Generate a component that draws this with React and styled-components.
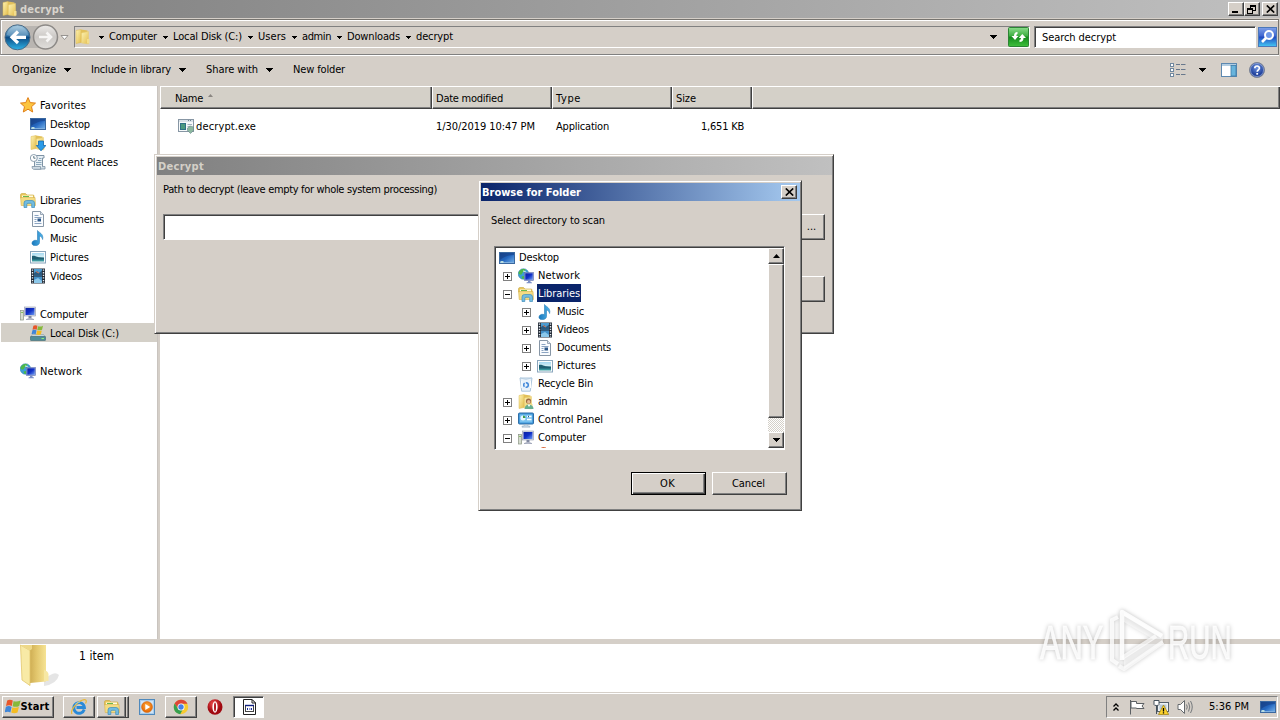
import React, { useLayoutEffect, useRef, useState } from 'react';
import styled, { createGlobalStyle, css } from 'styled-components';

const FACE = '#d5cfc8';
const DARK = '#404040';
const MID = '#808080';

const Global = createGlobalStyle`
  * { box-sizing: border-box; }
  body {
    margin: 0;
    width: 1280px;
    height: 720px;
    overflow: hidden;
    background: ${FACE};
    color: #000;
    font: 11px/14px 'DejaVu Sans Condensed', 'DejaVu Sans', sans-serif;
  }
  svg { display: block; flex: none; }
`;

/* ---------- text ---------- */

const Text = styled.span`
  display: inline-block;
  align-self: center;
  white-space: pre;
  flex: none;
`;

/* Spreads the letters so that a caption fills the given width. */
function Fit({ w, children, className }) {
  const ref = useRef(null);
  const [gap, setGap] = useState(0);
  useLayoutEffect(() => {
    const natural = ref.current.getBoundingClientRect().width;
    setGap((w - natural) / children.length);
  }, [w, children]);
  return <Text ref={ref} className={className} style={{ letterSpacing: gap }}>{children}</Text>;
}

/* ---------- icons ---------- */

const Svg = ({ s = 16, children }) => (
  <svg width={s} height={s} viewBox="0 0 16 16">{children}</svg>
);

const Defs = styled.svg`
  position: absolute;
`;

const Gradients = () => (
  <Defs width="0" height="0">
    <defs>
      <linearGradient id="gFolder" x1="0" x2="1" y1="0" y2="1"><stop offset="0" stopColor="#fdf3b4" /><stop offset="1" stopColor="#e3bd4c" /></linearGradient>
      <linearGradient id="gScreen" x1="0" x2="1" y1="0" y2="1"><stop offset="0" stopColor="#1c4a8c" /><stop offset=".5" stopColor="#2467c0" /><stop offset="1" stopColor="#7db8ec" /></linearGradient>
      <linearGradient id="gMon" x1="0" x2="1" y1="0" y2="1"><stop offset="0" stopColor="#0a1fa0" /><stop offset=".5" stopColor="#1030c8" /><stop offset="1" stopColor="#6f9cf0" /></linearGradient>
      <linearGradient id="gNote" x1="0" x2="1"><stop offset="0" stopColor="#1778bd" /><stop offset="1" stopColor="#52b5ea" /></linearGradient>
      <linearGradient id="gPhoto" x1="0" x2="0" y1="0" y2="1"><stop offset="0" stopColor="#a5d8f2" /><stop offset=".5" stopColor="#d8f0f4" /><stop offset=".55" stopColor="#27748a" /><stop offset="1" stopColor="#3fa2a4" /></linearGradient>
      <linearGradient id="gBack" x1="0" x2="0" y1="0" y2="1"><stop offset="0" stopColor="#9cc4dc" /><stop offset=".45" stopColor="#2a6fa4" /><stop offset=".5" stopColor="#0d4a82" /><stop offset="1" stopColor="#2fb4e8" /></linearGradient>
      <linearGradient id="gFwd" x1="0" x2="0" y1="0" y2="1"><stop offset="0" stopColor="#eceae8" /><stop offset=".5" stopColor="#cbc8c5" /><stop offset="1" stopColor="#e0dedb" /></linearGradient>
      <linearGradient id="gGreen" x1="0" x2="0" y1="0" y2="1"><stop offset="0" stopColor="#8bdc8b" /><stop offset=".45" stopColor="#3cae40" /><stop offset=".5" stopColor="#148a1c" /><stop offset="1" stopColor="#3fc03c" /></linearGradient>
      <linearGradient id="gSearch" x1="0" x2="0" y1="0" y2="1"><stop offset="0" stopColor="#7fa0e8" /><stop offset=".45" stopColor="#3f66d0" /><stop offset=".5" stopColor="#2048c0" /><stop offset="1" stopColor="#44c8f4" /></linearGradient>
      <radialGradient id="gHelp" cx=".5" cy=".35"><stop offset="0" stopColor="#6f94e0" /><stop offset="1" stopColor="#1c3c98" /></radialGradient>
      <radialGradient id="gOpera" cx=".4" cy=".3"><stop offset="0" stopColor="#f05050" /><stop offset="1" stopColor="#a00810" /></radialGradient>
      <radialGradient id="gOrange" cx=".5" cy=".4"><stop offset="0" stopColor="#ffb040" /><stop offset="1" stopColor="#e86c08" /></radialGradient>
      <linearGradient id="gBig" x1="0" x2="1"><stop offset="0" stopColor="#cfae54" /><stop offset=".4" stopColor="#e2c66c" /><stop offset="1" stopColor="#f6e394" /></linearGradient>
      <pattern id="dither" width="2" height="2" patternUnits="userSpaceOnUse"><rect width="2" height="2" fill="#fff" /><rect width="1" height="1" fill="#d4d0c8" /><rect x="1" y="1" width="1" height="1" fill="#d4d0c8" /></pattern>
    </defs>
  </Defs>
);

const Flag = () => (
  <>
    <path d="M2.2 1.600C4 .4 5.800 .6 7.800 1.600L6.800 7C5 6 3.200 6 1 7Z" fill="#e8562a" />
    <path d="M8.600 2C10.400 2.800 12.800 2.800 15.600 1.400L14.200 7C11.800 8.200 9.600 8 7.600 7.200Z" fill="#86b93a" />
    <path d="M.9 7.800C3 6.800 4.800 6.900 6.600 7.900L5.400 13.400C3.800 12.400 2 12.400 -.4 13.400Z" fill="#3f86d8" />
    <path d="M7.400 8.200C9.200 9 11.400 9 13.900 8L12.500 13.600C10.200 14.600 8 14.400 6.200 13.600Z" fill="#f4bc22" />
  </>
);

const Mini = () => (
  <>
    <path d="M1 1.500L6 .5v13L1 14.500Z" fill="url(#gFolder)" stroke="#dcb850" strokeWidth=".5" />
    <path d="M6 .5L12.500 1.500V14L6 13.500Z" fill="#e2c05a" />
    <path d="M6.500 4L13.500 2.500V15L6.500 14Z" fill="url(#gFolder)" stroke="#e8cc70" strokeWidth=".5" />
    <path d="M12 10h2.500v4.500H12Z" fill="#f3dd8c" />
  </>
);

const Stacked = () => (
  <>
    <path d="M.5 3Q.5 1.500 2 1.500H5.500L7 3H13Q14 3 14 4V6H.5Z" fill="#e9c95c" stroke="#c9a53a" strokeWidth=".6" />
    <rect x="2" y="3.500" width="11" height="6" fill="#fffbe0" />
    <path d="M3 4.500h6" stroke="#68b84c" />
    <path d="M.6 5.500H15L15.500 13.500H1.200Z" fill="#f4dc82" stroke="#d6b24c" strokeWidth=".6" />
    <path d="M4 15.500V11Q4 8.500 6.500 8.500H12Q14.500 8.500 14.500 11V15.500H11.700V12.500Q11.700 11.300 10.500 11.300H8Q6.800 11.300 6.800 12.500V15.500Z" fill="#72bce0" stroke="#3e8cbc" strokeWidth=".7" />
  </>
);

const Sheet = () => (
  <>
    <path d="M2.500 .5H10.500L13.500 3.500V15.500H2.500Z" fill="#fafcfe" stroke="#8796a6" />
    <path d="M10.500 .5V3.500H13.500" fill="#dbe4ee" stroke="#8796a6" strokeWidth=".8" />
    <path d="M4.500 4.500h4M4.500 6.500h7M4.500 8.500h2M4.500 10.500h2M4.500 12.500h7" stroke="#8ba4c2" />
    <rect x="7.500" y="7.500" width="3.500" height="3" fill="#2c5788" />
  </>
);

const shapes = {
  star: <path d="M8 .6L10.200 5.600L15.500 6.100L11.500 9.700L12.700 15L8 12.200L3.300 15L4.500 9.700L.5 6.100L5.800 5.600Z" fill="#fcc540" stroke="#e07f18" strokeWidth="1" strokeLinejoin="round" />,
  desktop: (
    <>
      <rect x=".5" y="2.500" width="15" height="11" fill="url(#gScreen)" stroke="#3a68a0" />
      <path d="M1 3H15V5C9 5 5 7 1 10Z" fill="#163e86" opacity=".6" />
      <path d="M1 12.500h14" stroke="#7fb0e0" /><path d="M1.500 11h3v2h-3Z" fill="#b8dce0" />
    </>
  ),
  downloads: (
    <>
      <Mini />
      <path d="M8.500 6H13.500V10.500H15.900L11 15.800L6.300 10.500H8.500Z" fill="#2a9be8" stroke="#1468b0" strokeWidth=".8" />
    </>
  ),
  recent: (
    <>
      <path d="M4.500 1.500H14V4H12.500V13Q12.500 15 10.500 15H4.500Z" fill="#e6eef4" stroke="#7f93a4" />
      <path d="M2 12.500H10.500V15.300H3.500Q2 15 2 12.500Z" fill="#cfdbe4" stroke="#7f93a4" strokeWidth=".8" />
      <path d="M12.500 12.500h2.500v2.500H10.500" fill="#cfdbe4" stroke="#7f93a4" strokeWidth=".8" />
      <path d="M9 4.500h2.500M8 6.500h3.500M6 8.500h5.500M6 10.500h5.500" stroke="#8ba8bc" />
      <circle cx="3.800" cy="4" r="3.500" fill="#fff" stroke="#8c9eae" /><path d="M3.800 2v2.200H5.500" stroke="#356" fill="none" strokeWidth=".8" />
    </>
  ),
  libraries: <Stacked />,
  documents: <Sheet />,
  music: <path d="M7.500 .5C8.500 2.500 14 3.500 12.600 9.500C12.300 7 10.500 6.200 9.500 6V12.500C9.500 14.700 7 15.800 4.800 15.600C2.300 15.500 1.300 13.500 2.400 11.800C3.400 10.200 5.700 9.900 7.500 10.700Z" fill="url(#gNote)" stroke="#2b7fb8" strokeWidth=".6" />,
  pictures: (
    <>
      <rect x=".5" y="2.500" width="15" height="11.500" fill="#fbfdfe" stroke="#8aa5bc" />
      <rect x="2" y="4" width="12" height="8.500" fill="url(#gPhoto)" />
      <path d="M2 7C5 6 7 9 14 9V10.500H2Z" fill="#1f5e72" />
    </>
  ),
  videos: (
    <>
      <rect x="1" y=".5" width="14" height="15" fill="#232b36" />
      <rect x="4" y="1" width="8" height="6.500" fill="#4c9bd0" /><rect x="4" y="8.500" width="8" height="6.500" fill="#4390c8" />
      <path d="M4 5L7 3L9 5L12 2.500V7.500H4Z" fill="#2a5a80" /><path d="M6 3.500l3 1.500" stroke="#d88060" /><path d="M4 12L8 10L12 13V15H4Z" fill="#8cc8ea" />
      <path d="M2.500 1.500V15M13.500 1.500V15" stroke="#e8eef4" strokeWidth="1.400" strokeDasharray="1.300 1.300" />
    </>
  ),
  computer: (
    <>
      <rect x=".6" y="4.500" width="3" height="9.500" fill="#d6dccf" stroke="#8a9484" strokeWidth=".7" /><path d="M1.300 6.500h1.500" stroke="#6bb83c" />
      <rect x="4.500" y="1" width="11" height="9" fill="#d9dde8" stroke="#9298ac" strokeWidth=".6" />
      <rect x="5.500" y="2" width="9" height="7" fill="url(#gMon)" />
      <path d="M8.500 10h3v2h-3Z" fill="#8088a0" /><path d="M6 13.500Q10 11 14 13.500Z" fill="#b8bfd0" stroke="#868ca4" strokeWidth=".5" />
    </>
  ),
  disk: (
    <>
      <path d="M2.500 9.500H13.500L15.500 12H.5Z" fill="#c9d6da" stroke="#7e929a" strokeWidth=".5" />
      <rect x=".5" y="11.500" width="15" height="4" rx=".6" fill="#4f8d98" stroke="#3c6672" strokeWidth=".6" /><path d="M11.500 13.500h2.500" stroke="#8ff078" />
      <g transform="translate(1.800 -.3) scale(.72)"><Flag /></g>
    </>
  ),
  network: (
    <>
      <circle cx="5.500" cy="6" r="5.300" fill="#3b9fd4" stroke="#287ba8" strokeWidth=".5" />
      <path d="M2 2.500C4 .8 6 1 7.500 1.400C7 3.500 4.500 3.500 4 5.500C3.500 7.500 1.500 6.500 .5 5.500C.6 4.300 1 3.300 2 2.500ZM3.500 8.500L6 8V10.800L4.500 11Z" fill="#4db848" />
      <path d="M5 3Q8 3 8.500 5" stroke="#d8f2fa" fill="none" />
      <rect x="6.500" y="4.500" width="9" height="8" fill="#9fb0dc" stroke="#5f70b0" strokeWidth=".6" /><rect x="7.300" y="5.300" width="7.400" height="6.400" fill="url(#gMon)" />
      <path d="M10 12.500h2.500v1.500h-2.500ZM8.500 14.500Q11 13 14 14.500V15.200H8.500Z" fill="#7c90c8" />
    </>
  ),
  folder: <Mini />,
  bin: (
    <>
      <path d="M2 2H14L12.300 15.200H3.700Z" fill="#e9f2fa" stroke="#a4bfd8" strokeWidth=".9" />
      <path d="M2 2Q8 4.500 14 2" fill="none" stroke="#b8cfe2" /><path d="M3.800 5V12M12.500 5V12" stroke="#fff" />
      <circle cx="8" cy="9" r="2.300" fill="none" stroke="#3f86d8" strokeWidth="1.500" strokeDasharray="3.600 1.200" />
    </>
  ),
  admin: (
    <>
      <Mini />
      <circle cx="10.500" cy="7" r="2.600" fill="#9c6a42" /><circle cx="10.700" cy="7.800" r="1.700" fill="#e8bb92" />
      <path d="M6.500 15Q7 10.500 11 10.500Q15.500 11 15.500 15Z" fill="#67ae90" /><path d="M9.500 10.500L11 13L12.500 10.600Z" fill="#fff" />
    </>
  ),
  control: (
    <>
      <rect x=".5" y="1" width="15" height="11" rx="1" fill="#3c94d8" stroke="#2f6fa8" />
      <rect x="1.800" y="2.500" width="12.400" height="8" fill="#79c2f0" />
      <circle cx="5" cy="6" r="2.500" fill="#e8f6ff" /><path d="M5 6V3.500A2.500 2.500 0 0 1 7.500 6Z" fill="#3f9a48" />
      <path d="M9 4.500h4.500M9 7.500h4.500" stroke="#fff" strokeWidth="1.400" /><path d="M10.500 3.800v1.400" stroke="#205888" />
      <path d="M6 12.500h4v1.500h2v1.300H4V14h2Z" fill="#c4d4e2" stroke="#8ba2b8" strokeWidth=".4" />
    </>
  ),
  exe: (
    <>
      <rect x=".5" y="1.500" width="15" height="12" fill="#f6f9fa" stroke="#8796a4" /><path d="M1 3h14" stroke="#b9c8d4" /><path d="M10 2.500h4" stroke="#6d8292" strokeDasharray="1 1" />
      <rect x="2" y="5" width="6" height="7" fill="#2e7286" /><rect x="3" y="6" width="4" height="5" fill="#4b9a80" />
      <path d="M9.500 6.500h4.500M9.500 8.500h3" stroke="#a4b4c0" />
      <path d="M12 8L15.500 9V12.500L12.500 15.500L9.500 12.500V10Z" fill="#8db8a0" stroke="#68888c" strokeWidth=".6" />
    </>
  ),
  ie: (
    <>
      <path d="M13.200 10.500A5.300 5.300 0 1 1 13.400 8.500H5.500" fill="none" stroke="#2a8ad8" strokeWidth="2.900" />
      <path d="M1 15C-1.200 12 5 3.500 11 1.200C15 -.2 16.200 1.500 14.500 4.500" fill="none" stroke="#e8b838" strokeWidth="1.200" />
      <path d="M4 5.500Q6 3 9 3" stroke="#8ed0f8" fill="none" strokeWidth=".8" />
    </>
  ),
  wmp: (
    <>
      <rect x=".5" y=".5" width="15" height="15" fill="#a9cdec" stroke="#4f89bc" /><rect x="2" y="2" width="12" height="12" fill="#cfe4f6" />
      <circle cx="8" cy="8" r="5.500" fill="url(#gOrange)" stroke="#c86410" strokeWidth=".5" /><path d="M6.300 5L11.200 8L6.300 11Z" fill="#fff" />
    </>
  ),
  chrome: (
    <>
      <circle cx="8" cy="8" r="7.200" fill="#f7ca30" />
      <path d="M1.600 4.600A7.200 7.200 0 0 1 14.500 4.800H8L5 9.500Z" fill="#dd4638" /><path d="M1.600 4.600L5 9.600L9.500 11L7.200 15.200A7.200 7.200 0 0 1 1.600 4.600Z" fill="#36a050" />
      <circle cx="8" cy="8" r="3.500" fill="#fff" /><circle cx="8" cy="8" r="2.700" fill="#4580e8" />
    </>
  ),
  opera: (
    <>
      <ellipse cx="8" cy="8" rx="7.500" ry="7.700" fill="url(#gOpera)" /><ellipse cx="8" cy="8" rx="2.600" ry="5.700" fill="#fff" /><ellipse cx="8" cy="8" rx="1" ry="4.600" fill="#b41820" />
    </>
  ),
  app: (
    <>
      <path d="M2.500 .5H11L14.500 4V15.500H2.500Z" fill="#fff" stroke="#222" /><path d="M11 .5V4H14.500Z" fill="#fff" stroke="#222" />
      <rect x="4.500" y="6.500" width="8" height="6" fill="#fff" stroke="#444" /><path d="M4 6.500h9" stroke="#102080" strokeWidth="1.400" />
      <path d="M6.500 9v2M8 10h1.500M10.500 9v2" stroke="#1c30a0" />
    </>
  ),
  views: (
    <>
      {[1.5, 6.5, 11.5].map((y) => (
        <g key={y}><rect x=".5" y={y} width="3" height="3" fill="#fff" stroke="#7088a0" /><path d={`M6 ${y + 1}h4M11 ${y + 1}h4.500`} stroke="#68788c" strokeWidth="1" /></g>
      ))}
    </>
  ),
  preview: (
    <>
      <rect x=".5" y="1.500" width="15" height="13" fill="#fff" stroke="#5c88b0" /><path d="M1 3h14" stroke="#98bcd8" strokeWidth="1.500" /><rect x="10" y="3.500" width="5" height="10.500" fill="#68b4dc" stroke="#3c7ca8" strokeWidth=".8" />
    </>
  ),
  help: (
    <>
      <circle cx="8" cy="8" r="7.500" fill="url(#gHelp)" stroke="#7c8494" /><circle cx="8" cy="8" r="6.500" fill="none" stroke="#b9c8ea" strokeWidth=".6" />
      <path d="M5.800 6.300C5.800 3.200 10.500 3.300 10.400 6.200C10.300 7.800 8.200 8 8.200 9.800" fill="none" stroke="#fff" strokeWidth="1.700" /><rect x="7.300" y="11" width="1.800" height="1.700" fill="#fff" />
    </>
  ),
  flag: <Flag />,
  tray1: <path d="M1.500 1V15.500M2 2.500H7.500V4.500H15L13 7L15 9.500H7.500V9H2Z" fill="#fff" stroke="#5c6064" strokeWidth="1" />,
  tray2: (
    <>
      <rect x="4.500" y="3.500" width="11" height="9" fill="#eef2f4" stroke="#54606c" /><rect x="6.500" y="5.500" width="7" height="5" fill="#b6c8d8" />
      <path d="M1 1.500h5v4Q6 6.500 3.500 6.500Q1 6.500 1 5.500ZM3.500 6.500V15" fill="#fff" stroke="#44505c" />
      <path d="M10.500 6L15.700 15.500H5.500Z" fill="#fbd12c" stroke="#9c7c0c" strokeWidth=".7" /><path d="M10.500 9v3.500M10.500 13.300v1.200" stroke="#000" strokeWidth="1.300" />
    </>
  ),
  tray3: (
    <>
      <path d="M1 5.500H3.500L7.500 1.500V14.500L3.500 10.500H1Z" fill="#fff" stroke="#666a6e" /><path d="M9.500 5.500Q11 8 9.500 10.500M11.500 3.500Q14 8 11.500 12.500M13.500 2Q17 8 13.500 14" stroke="#74787c" fill="none" />
    </>
  ),
};

const Icon = ({ name, s }) => <Svg s={s}>{shapes[name]}</Svg>;

const Down = ({ w = 7 }) => (
  <svg width={w} height={(w + 1) / 2} viewBox={`0 0 ${w} ${(w + 1) / 2}`} shapeRendering="crispEdges"><path d={`M0 0H${w}L${w / 2} ${(w + 1) / 2}Z`} /></svg>
);

const Cross = () => <svg width="9" height="8" viewBox="0 0 9 8"><path d="M.8 .5L8.200 7.500M8.200 .5L.8 7.500" stroke="#000" strokeWidth="1.700" /></svg>;

/* ---------- shared surfaces ---------- */

const raised = css`
  background: ${FACE};
  border: 1px solid;
  border-color: #fff ${DARK} ${DARK} #fff;
  box-shadow: inset -1px -1px 0 ${MID};
`;

const sunken = css`
  border: 1px solid;
  border-color: ${MID} #fff #fff ${MID};
  box-shadow: inset 1px 1px 0 ${DARK};
`;

const Button = styled.div`
  ${raised}
  display: flex;
  align-items: center;
  justify-content: center;
  width: ${(p) => p.$w}px;
  height: ${(p) => p.$h}px;
  padding-right: ${(p) => (p.$text ? 2 : 0)}px;
  flex: none;
  ${(p) => p.$default && css`
    border-color: #000;
    box-shadow: inset 1px 1px 0 #fff, inset -1px -1px 0 ${DARK}, inset -2px -2px 0 ${MID};
  `}
`;

/* ---------- explorer window ---------- */

const Screen = styled.div`
  position: relative;
  display: flex;
  flex-direction: column;
  width: 1280px;
  height: 720px;
  overflow: hidden;
  background: ${FACE};
`;

const TitleBar = styled.div`
  display: flex;
  align-items: center;
  gap: 2px;
  height: 18px;
  flex: none;
  padding: 0 2px;
  background: linear-gradient(90deg, #808080, #c0c0c0);
`;

const TitleText = styled(Fit)`
  margin-top: ${(p) => p.$drop ?? 0}px;
  font-weight: bold;
  color: ${(p) => p.$color};
`;

const WindowButtons = styled.div`
  display: flex;
  margin-left: auto;
`;

const CloseGap = styled.div`
  width: 2px;
`;

const AddressBar = styled.div`
  display: flex;
  align-items: center;
  height: 36px;
  flex: none;
  margin: 1px 1px 0 0;
  padding: 0 0 0 3px;
  border: 1px solid;
  border-color: #77746f #77746f ${MID} #a09c98;
  box-shadow: inset 1px 1px 0 #fff, 0 1px 0 #fff;
`;

const AddressField = styled.div`
  display: flex;
  align-items: center;
  width: 956px;
  height: 22px;
  margin-left: 4px;
  border: 1px solid;
  border-color: ${MID} #fff #fff ${MID};
`;

const AddressIcon = styled.div`
  margin-right: 2px;
`;

const CrumbArrow = styled.span`
  display: flex;
  justify-content: center;
  width: 16px;
  flex: none;
`;

const AddressTail = styled.div`
  display: flex;
  align-items: center;
  gap: 11px;
  margin-left: auto;
`;

const SearchField = styled.div`
  ${sunken}
  display: flex;
  align-items: center;
  width: 222px;
  height: 22px;
  margin: 0 2px 0 4px;
  padding: 1px 0 0 7px;
  background: #fff;
`;

const CommandBar = styled.div`
  display: flex;
  align-items: center;
  height: 31px;
  flex: none;
  padding: 0 15px 1px 12px;
`;

const Command = styled.div`
  display: flex;
  align-items: center;
  gap: 8px;
  width: ${(p) => p.$w}px;
`;

const CommandIcons = styled.div`
  display: flex;
  align-items: center;
  gap: 12px;
  margin-left: auto;
`;

const IconGap = styled.div`
  display: flex;
  margin: 0 3px 0 1px;
`;

const Body = styled.div`
  display: flex;
  height: 553px;
  flex: none;
`;

const NavPane = styled.div`
  width: 157px;
  padding-top: 9px;
  background: #fff;
`;

const Splitter = styled.div`
  width: 3px;
  background: linear-gradient(90deg, #c9c4bf 0 1px, ${FACE} 1px);
`;

const NavRow = styled.div`
  display: flex;
  align-items: center;
  gap: 4px;
  height: 19px;
  margin-left: 1px;
  margin-right: ${(p) => (p.$selected ? -3 : 0)}px;
  padding-left: ${(p) => (p.$child ? 29 : 19)}px;
  background: ${(p) => (p.$selected ? '#d4d0c8' : 'transparent')};
`;

const LowText = styled(Fit)`
  margin-top: 2px;
`;

const FileList = styled.div`
  flex: 1;
  background: #fff;
`;

const HeaderRow = styled.div`
  display: flex;
  height: 23px;
  border-top: 1px solid #fff;
`;

const HeaderCell = styled.div`
  display: flex;
  align-items: center;
  gap: 5px;
  width: ${(p) => p.$w}px;
  flex: ${(p) => (p.$w ? 'none' : 1)};
  padding-left: ${(p) => p.$pad ?? 4}px;
  background: #d4d0c8;
  border: solid;
  border-width: 0 1px 1px 1px;
  border-color: #fff ${DARK} ${DARK} #fff;
  box-shadow: inset -1px -1px 0 ${MID};
`;

const FileRow = styled.div`
  display: flex;
  align-items: center;
  height: 18px;
  margin-top: 8px;
`;

const FileCell = styled.div`
  display: flex;
  align-items: center;
  gap: 2px;
  justify-content: ${(p) => (p.$right ? 'flex-end' : 'flex-start')};
  width: ${(p) => p.$w}px;
  padding: 0 8px 0 ${(p) => p.$pad ?? 4}px;
`;

const DetailsPane = styled.div`
  display: flex;
  height: 53px;
  flex: none;
  padding-left: 20px;
  background: #fff;
  border-top: 5px solid ${FACE};
`;

const DetailsText = styled(Fit)`
  align-self: flex-start;
  margin: 5px 0 0 19px;
  font-size: 12px;
`;

/* ---------- taskbar ---------- */

const Taskbar = styled.div`
  display: flex;
  flex: 1;
  padding: 3px 2px 2px;
  border-top: 1px solid ${FACE};
  box-shadow: inset 0 1px 0 #fff;
`;

const StartButton = styled(Button)`
  padding-right: 2px;
  margin: 0 9px 0 0;
  font-weight: bold;
`;

const TaskButton = styled.div`
  display: flex;
  align-items: center;
  justify-content: center;
  width: ${(p) => p.$w}px;
  height: 22px;
  margin-right: ${(p) => p.$gap ?? 0}px;
  ${(p) => p.$kind === 'window' && raised}
  ${(p) => p.$kind === 'active' && css`
    ${sunken}
    background: #fff;
  `}
`;

const GroupEdge = styled.div`
  width: 4px;
  height: 22px;
  margin: 0 7px 0 -1px;
  border: solid;
  border-width: 1px 1px 1px 0;
  border-color: #fff ${DARK} ${DARK};
  box-shadow: inset -1px 0 0 ${MID};
`;

const Tray = styled.div`
  display: flex;
  align-items: center;
  width: 172px;
  height: 22px;
  margin-left: auto;
  padding-left: 6px;
  border: 1px solid;
  border-color: ${MID} #fff #fff ${MID};
`;

const TrayItem = styled.div`
  display: flex;
  margin-right: ${(p) => p.$gap}px;
`;

/* ---------- dialogs ---------- */

const Dialog = styled.div`
  position: absolute;
  left: ${(p) => p.$x}px;
  top: ${(p) => p.$y}px;
  width: ${(p) => p.$w}px;
  height: ${(p) => p.$h}px;
  padding: 1px;
  background: ${FACE};
  border: 1px solid;
  border-color: ${FACE} ${DARK} ${DARK} ${FACE};
  box-shadow: inset 1px 1px 0 #fff, inset -1px -1px 0 ${MID};
`;

const DialogTitle = styled.div`
  display: flex;
  align-items: center;
  justify-content: space-between;
  height: 18px;
  margin: 1px 0 0 1px;
  padding: 0 3px 0 1px;
  background: ${(p) => (p.$active ? 'linear-gradient(90deg, #0a246a, #a6caf0)' : 'linear-gradient(90deg, #808080, #c0c0c0)')};
`;

const DecryptBody = styled.div`
  display: flex;
  flex-direction: column;
  padding: 8px 7px 0 7px;
`;

const Caption = styled.div`
  display: flex;
  height: 14px;
`;

const PathRow = styled.div`
  display: flex;
  justify-content: space-between;
  margin-top: 17px;
`;

const PathField = styled.div`
  ${sunken}
  width: 600px;
  height: 26px;
  background: #fff;
`;

const ActionRow = styled.div`
  display: flex;
  justify-content: flex-end;
  margin-top: 36px;
`;

const BrowseBody = styled.div`
  display: flex;
  flex-direction: column;
  padding: 13px 13px 0 14px;
`;

const Prompt = styled.div`
  height: 32px;
  margin-left: -3px;
`;

const TreeBox = styled.div`
  ${sunken}
  display: flex;
  width: 291px;
  height: 204px;
  padding: 1px 0 1px 1px;
  background: #fff;
`;

const TreeItems = styled.div`
  flex: 1;
  overflow: hidden;
`;

const TreeRow = styled.div`
  display: flex;
  align-items: center;
  height: 18px;
  padding-left: ${(p) => [3, 7, 26][p.$level]}px;
`;

const TreeIcon = styled.div`
  display: flex;
  margin: 1px 3px 0 ${(p) => p.$indent}px;
`;

const TreeLabel = styled.div`
  padding: 3px 1px 1px;
  height: 18px;
  margin-right: auto;
  background: ${(p) => (p.$selected ? '#0a246a' : 'transparent')};
  color: ${(p) => (p.$selected ? '#fff' : '#000')};
`;

const Expander = styled.div`
  display: flex;
  width: 9px;
  margin-top: 2px;
`;

const ScrollBar = styled.div`
  display: flex;
  flex-direction: column;
  width: 16px;
`;

const Thumb = styled.div`
  ${raised}
  height: 154px;
`;

const Buttons = styled.div`
  display: flex;
  justify-content: flex-end;
  gap: 6px;
  margin-top: 22px;
`;

const Watermark = styled.svg`
  position: absolute;
  left: 1030px;
  top: 600px;
  filter: drop-shadow(0 0 2px rgba(0, 0, 0, 0.28));
`;

/* ---------- data ---------- */

const crumbs = [['Computer', 48], ['Local Disk (C:)', 69], ['Users', 28], ['admin', 29], ['Downloads', 53], ['decrypt', 37]];

const nav = [
  ['star', 'Favorites', 46],
  ['desktop', 'Desktop', 40, 1],
  ['downloads', 'Downloads', 53, 1],
  ['recent', 'Recent Places', 68, 1],
  null,
  ['libraries', 'Libraries', 41],
  ['documents', 'Documents', 54, 1],
  ['music', 'Music', 27, 1],
  ['pictures', 'Pictures', 39, 1],
  ['videos', 'Videos', 32, 1],
  null,
  ['computer', 'Computer', 48],
  ['disk', 'Local Disk (C:)', 69, 1, true],
  null,
  ['network', 'Network', 42],
];

const tree = [
  [0, '', 'desktop', 'Desktop', 40],
  [1, '+', 'network', 'Network', 42],
  [1, '-', 'libraries', 'Libraries', 42, true],
  [2, '+', 'music', 'Music', 27],
  [2, '+', 'videos', 'Videos', 32],
  [2, '+', 'documents', 'Documents', 54],
  [2, '+', 'pictures', 'Pictures', 39],
  [1, '', 'bin', 'Recycle Bin', 55],
  [1, '+', 'admin', 'admin', 29],
  [1, '+', 'control', 'Control Panel', 65],
  [1, '-', 'computer', 'Computer', 48],
];

const commands = [['Organize', 44, 79], ['Include in library', 80, 115], ['Share with', 52, 87]];

function NavButtons() {
  return (
    <svg width="66" height="30" viewBox="4 22 66 30">
      <path d="M12 26H50Q56 30 56 37Q56 46 50 48H12Z" fill="#b9b5b1" />
      <circle cx="45.500" cy="37" r="12" fill="url(#gFwd)" stroke="#8d8a87" strokeWidth="1.500" />
      <path d="M39 37h11M46.500 32.500l4.500 4.500l-4.500 4.500" fill="none" stroke="#f6f5f4" strokeWidth="2.600" />
      <circle cx="17.500" cy="37.300" r="12.500" fill="url(#gBack)" stroke="#4c6a84" strokeWidth="1" />
      <path d="M6.500 35A11.200 11.200 0 0 1 28.500 35Q17 39 6.500 35Z" fill="#fff" opacity=".22" />
      <path d="M26 37.300H13M18 31.500L12 37.300L18 43" fill="none" stroke="#fff" strokeWidth="3.200" />
      <path d="M61 35.500h7l-3.500 4Z" fill="#fff" stroke="#8d8a87" strokeWidth=".9" />
    </svg>
  );
}

function Explorer() {
  return (
    <>
      <TitleBar>
        <Icon name="folder" />
        <TitleText w={44} $color="#d8d4cc" $drop={1}>decrypt</TitleText>
        <WindowButtons>
          <Button $w={16} $h={14}><svg width="10" height="8"><path d="M1 7H7" stroke="#000" strokeWidth="2" /></svg></Button>
          <Button $w={16} $h={14}>
            <svg width="10" height="9" shapeRendering="crispEdges"><path d="M3.500 5V.5H8.500V5.500H6M3 1.500H9M.5 3.500H5.500V8.500H.5ZM0 4.500H6" fill="none" stroke="#000" /></svg>
          </Button>
          <CloseGap />
          <Button $w={16} $h={14}><Cross /></Button>
        </WindowButtons>
      </TitleBar>
      <AddressBar>
        <NavButtons />
        <AddressField>
          <AddressIcon><Icon name="folder" /></AddressIcon>
          {crumbs.map(([label, w]) => (
            <React.Fragment key={label}>
              <CrumbArrow><Down w={5} /></CrumbArrow>
              <Fit w={w}>{label}</Fit>
            </React.Fragment>
          ))}
          <AddressTail>
            <Down />
            <svg width="21" height="20" viewBox="0 0 21 20">
              <rect x=".5" y=".5" width="20" height="19" rx="1" fill="url(#gGreen)" stroke="#2c8434" />
              <path d="M9.500 5Q6 5 6 9H3.500L7 13L10.500 9H8.300Q8.300 7 9.500 7ZM11.500 15Q15.500 15 15.500 11H18L14.300 7L10.800 11H13Q13 13 11.500 13Z" fill="#fff" />
            </svg>
          </AddressTail>
        </AddressField>
        <SearchField><Fit w={74}>Search decrypt</Fit></SearchField>
        <svg width="19" height="20" viewBox="0 0 19 20">
          <rect x=".5" y=".5" width="18" height="19" fill="url(#gSearch)" stroke="#4c78b8" />
          <circle cx="11" cy="8" r="4" fill="#6f98e8" stroke="#fff" strokeWidth="2" /><path d="M8 11L4 15" stroke="#fff" strokeWidth="2.600" />
        </svg>
      </AddressBar>
      <CommandBar>
        {commands.map(([label, w, slot]) => (
          <Command key={label} $w={slot}><Fit w={w}>{label}</Fit><Down /></Command>
        ))}
        <Fit w={52}>New folder</Fit>
        <CommandIcons>
          <Icon name="views" />
          <IconGap><Down /></IconGap>
          <Icon name="preview" />
          <Icon name="help" />
        </CommandIcons>
      </CommandBar>
      <Body>
        <NavPane>
          {nav.map((row, i) => (row ? (
            <NavRow key={i} $child={row[3]} $selected={row[4]}><Icon name={row[0]} /><LowText w={row[2]}>{row[1]}</LowText></NavRow>
          ) : <NavRow key={i} />))}
        </NavPane>
        <Splitter />
        <FileList>
          <HeaderRow>
            <HeaderCell $w={272} $pad={14}><LowText w={28}>Name</LowText><svg width="5" height="7"><path d="M0 3L2.500 0L5 3Z" fill="#8a8681" /></svg></HeaderCell>
            <HeaderCell $w={120} $pad={3}><LowText w={67}>Date modified</LowText></HeaderCell>
            <HeaderCell $w={120} $pad={3}><LowText w={25}>Type</LowText></HeaderCell>
            <HeaderCell $w={80} $pad={3}><LowText w={20}>Size</LowText></HeaderCell>
            <HeaderCell />
          </HeaderRow>
          <FileRow>
            <FileCell $w={272} $pad={18}><Icon name="exe" /><LowText w={60}>decrypt.exe</LowText></FileCell>
            <FileCell $w={120}><LowText w={99}>1/30/2019 10:47 PM</LowText></FileCell>
            <FileCell $w={120}><LowText w={53}>Application</LowText></FileCell>
            <FileCell $w={80} $right><LowText w={43}>1,651 KB</LowText></FileCell>
          </FileRow>
        </FileList>
      </Body>
      <DetailsPane>
        <svg width="40" height="44" viewBox="0 0 40 44">
          <path d="M24 36Q34 26 39 31Q37 40 24 42Z" fill="#000" opacity=".1" />
          <path d="M10 1H26V37.500L10 39Z" fill="url(#gBig)" />
          <path d="M24 26Q28 27 28.500 30V37H24Z" fill="#f7e8a4" />
          <path d="M.5 1L10 6.500V41.500L2 36Z" fill="#f8eaa6" stroke="#e2c66c" strokeWidth=".8" />
          <path d="M.5 1H12V5L10 6.500Z" fill="#eed888" />
        </svg>
        <DetailsText w={35}>1 item</DetailsText>
      </DetailsPane>
    </>
  );
}

function Bar() {
  return (
    <Taskbar>
      <StartButton $w={52} $h={22}><Icon name="flag" /><Fit w={29}>Start</Fit></StartButton>
      <TaskButton $kind="window" $w={32} $gap={2}><Icon name="ie" /></TaskButton>
      <TaskButton $kind="window" $w={29}><Icon name="libraries" /></TaskButton>
      <GroupEdge />
      <TaskButton $w={22} $gap={7}><Icon name="wmp" /></TaskButton>
      <TaskButton $kind="window" $w={32} $gap={7}><Icon name="chrome" /></TaskButton>
      <TaskButton $w={22} $gap={7}><Icon name="opera" /></TaskButton>
      <TaskButton $kind="active" $w={31}><Icon name="app" /></TaskButton>
      <Tray>
        <TrayItem $gap={10}><svg width="6" height="9"><path d="M.5 3.500L3 1L5.500 3.500M.5 7.500L3 5L5.500 7.500" fill="none" stroke="#000" strokeWidth="1.300" /></svg></TrayItem>
        <TrayItem $gap={8}><Icon name="tray1" /></TrayItem>
        <TrayItem $gap={8}><Icon name="tray2" /></TrayItem>
        <TrayItem $gap={16}><Icon name="tray3" /></TrayItem>
        <TrayItem $gap={11}><Fit w={40}>5:36 PM</Fit></TrayItem>
        <Icon name="desktop" />
      </Tray>
    </Taskbar>
  );
}

function DecryptDialog() {
  return (
    <Dialog $x={154} $y={154} $w={680} $h={180}>
      <DialogTitle><TitleText w={46} $color="#d4d0c8" $drop={1}>Decrypt</TitleText></DialogTitle>
      <DecryptBody>
        <Caption><Fit w={274}>Path to decrypt (leave empty for whole system processing)</Fit></Caption>
        <PathRow><PathField /><Button $w={27} $h={26}>...</Button></PathRow>
        <ActionRow><Button $w={75} $h={26} /></ActionRow>
      </DecryptBody>
    </Dialog>
  );
}

function TreeNode({ row: [level, sign, icon, label, w, selected] }) {
  return (
    <TreeRow $level={level}>
      {level > 0 && (
        <Expander>
          {sign && (
            <svg width="9" height="9" shapeRendering="crispEdges">
              <rect x=".5" y=".5" width="8" height="8" fill="#fff" stroke="#808080" />
              <path d={sign === '+' ? 'M2 4.500H7M4.500 2V7' : 'M2 4.500H7'} stroke="#000" />
            </svg>
          )}
        </Expander>
      )}
      <TreeIcon $indent={level ? 6 : 0}><Icon name={icon} /></TreeIcon>
      <TreeLabel $selected={selected}><Fit w={w}>{label}</Fit></TreeLabel>
    </TreeRow>
  );
}

function BrowseDialog() {
  return (
    <Dialog $x={478} $y={180} $w={324} $h={331}>
      <DialogTitle $active>
        <TitleText w={99} $color="#fff" $drop={1}>Browse for Folder</TitleText>
        <Button $w={16} $h={14}><Cross /></Button>
      </DialogTitle>
      <BrowseBody>
        <Prompt><Fit w={114}>Select directory to scan</Fit></Prompt>
        <TreeBox>
          <TreeItems>
            {tree.map((row) => <TreeNode key={row[3]} row={row} />)}
            <svg width="80" height="3"><path d="M44 3Q46 0 50 1.500V3Z" fill="#d8683c" /></svg>
          </TreeItems>
          <ScrollBar>
            <Button $w={16} $h={16}><svg width="7" height="4"><path d="M3.500 0L7 4H0Z" /></svg></Button>
            <Thumb />
            <svg width="16" height="14"><rect width="16" height="14" fill="url(#dither)" /></svg>
            <Button $w={16} $h={16}><Down /></Button>
          </ScrollBar>
        </TreeBox>
        <Buttons>
          <Button $w={75} $h={23} $default $text><Fit w={15}>OK</Fit></Button>
          <Button $w={75} $h={23} $text><Fit w={33}>Cancel</Fit></Button>
        </Buttons>
      </BrowseBody>
    </Dialog>
  );
}

function Brand() {
  return (
    <Watermark width="220" height="84" viewBox="1030 600 220 84">
      <g fill="#fff" fillOpacity=".85" stroke="#fff" strokeOpacity=".7" strokeWidth=".9" fontFamily="'Liberation Sans', sans-serif" fontSize="49">
        <text transform="translate(1040 659) scale(.63 1)">ANY</text>
        <text transform="translate(1168 659) scale(.6 1)">RUN</text>
      </g>
      <path d="M1124 612L1163 635V643L1124 669V658L1153 639L1124 622Z" fill="#fff" fillOpacity=".5" />
      <path d="M1122 641V612L1162 636M1122 612V660" fill="none" stroke="#fff" strokeOpacity=".9" strokeWidth="4.500" strokeLinejoin="round" />
      <path d="M1163 642L1124 669L1119 666M1122 658L1156 636" fill="none" stroke="#fff" strokeOpacity=".7" strokeWidth="4" strokeLinejoin="round" />
      <path d="M1118 617L1112 620V660L1118 664" fill="none" stroke="#fff" strokeOpacity=".8" strokeWidth="4" />
    </Watermark>
  );
}

export default function App() {
  return (
    <Screen>
      <Global />
      <Gradients />
      <Explorer />
      <Bar />
      <DecryptDialog />
      <BrowseDialog />
      <Brand />
    </Screen>
  );
}
